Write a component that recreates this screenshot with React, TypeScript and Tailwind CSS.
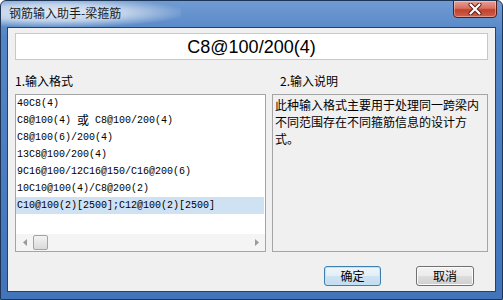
import React from "react";

const cjk = '"Noto Sans CJK SC", "Liberation Sans", sans-serif';
const mono = '"Liberation Mono", "Noto Sans CJK SC", monospace';

const rows: React.ReactNode[] = [
  "40C8(4)",
  <span className="flex items-center">C8@100(4) <span className="leading-[12px] text-[12px] -mt-[2px]" style={{ fontFamily: cjk }}>或</span> C8@100/200(4)</span>,
  "C8@100(6)/200(4)",
  "13C8@100/200(4)",
  "9C16@100/12C16@150/C16@200(6)",
  "10C10@100(4)/C8@200(2)",
  "C10@100(2)[2500];C12@100(2)[2500]",
];

export default function App() {
  return (
    <div
      className="w-[503px] h-[300px] flex flex-col rounded-t-[6px] border border-[#1d3557] bg-[linear-gradient(180deg,#719bd2_0%,#5385c6_12%,#4274ba_100%)] overflow-hidden"
      style={{ fontFamily: cjk }}
    >
      {/* title bar */}
      <div className="h-[26px] flex items-start shrink-0 relative">
        <div className="absolute left-0 top-0 w-[180px] h-[26px] bg-[radial-gradient(ellipse_at_30%_45%,rgba(235,240,248,0.95)_0%,rgba(215,226,240,0.8)_40%,rgba(120,160,210,0)_75%)]" />
        <span className="relative mt-[5px] ml-[8px] text-[12px] leading-[14px] text-[#1b1b1b]">钢筋输入助手-梁箍筋</span>
        <div className="relative ml-auto mr-[5px] w-[44px] h-[18px] -mt-px rounded-b-[4px] border border-[#5a1b14] bg-[linear-gradient(180deg,#e8a096_0%,#d7705f_45%,#c2412c_55%,#d0604a_100%)] flex items-center justify-center shadow-[inset_0_0_0_1px_rgba(255,255,255,0.35)]">
          <svg width="14" height="12" viewBox="0 0 14 12">
            <path d="M2.5 1.5 L11.5 10.5 M11.5 1.5 L2.5 10.5" stroke="#5a1b14" strokeWidth="4" strokeLinecap="round" />
            <path d="M2.5 1.5 L11.5 10.5 M11.5 1.5 L2.5 10.5" stroke="#ffffff" strokeWidth="2.2" strokeLinecap="round" />
          </svg>
        </div>
      </div>

      {/* client area */}
      <div className="ml-[6px] mr-[6px] h-[265px] border border-[#2a3f63] bg-[#f0f0f0] flex flex-col px-[7px]">
        {/* input box */}
        <div className="mt-[5px] h-[27px] bg-white border border-[#c8c8c8] flex items-center justify-center">
          <span className="text-[18px] leading-[20px] text-black" style={{ fontFamily: '"Liberation Sans", Arial, sans-serif' }}>
            C8@100/200(4)
          </span>
        </div>

        {/* labels */}
        <div className="flex mt-[12px] h-[17px] items-center text-[12px] leading-[14px] text-black">
          <div className="w-[257px]">1.输入格式</div>
          <div className="pl-[8px]">2.输入说明</div>
        </div>

        {/* boxes */}
        <div className="flex gap-[6px] mt-[5px] h-[158px]">
          <div className="w-[251px] border border-[#a5a5a5] bg-white flex flex-col">
            <div className="flex-1 flex flex-col pr-px text-[10px] text-black" style={{ fontFamily: mono }}>
              {rows.map((r, i) => (
                <div
                  key={i}
                  className={`h-[17px] flex items-center pl-[1px] whitespace-pre ${i === 6 ? "bg-[#cfe2f4]" : ""}`}
                >
                  {r}
                </div>
              ))}
            </div>
            {/* horizontal scrollbar */}
            <div className="h-[17px] flex items-center bg-[#f4f4f4]">
              <div className="w-[17px] h-[17px] flex items-center justify-center">
                <svg width="4" height="7" viewBox="0 0 4 7"><path d="M4 0 L0 3.5 L4 7 Z" fill="#9a9a9a" /></svg>
              </div>
              <div className="w-[15px] h-[15px] rounded-[2px] border border-[#a3a3a3] bg-[linear-gradient(180deg,#f3f3f3,#dadada)]" />
              <div className="flex-1" />
              <div className="w-[17px] h-[17px] flex items-center justify-center">
                <svg width="4" height="7" viewBox="0 0 4 7"><path d="M0 0 L4 3.5 L0 7 Z" fill="#9a9a9a" /></svg>
              </div>
            </div>
          </div>
          <div className="flex-1 border border-[#a5a5a5] bg-[#f0f0f0] pl-[2px] pt-[1px] text-[12px] leading-[17px] text-black">
            此种输入格式主要用于处理同一跨梁内不同范围存在不同箍筋信息的设计方式。
          </div>
        </div>

        {/* buttons */}
        <div className="flex justify-end gap-[35px] mt-[14px] pr-[14px]">
          <button className="w-[57px] h-[20px] rounded-[3px] border border-[#3c7fb1] bg-[linear-gradient(180deg,#eef6fb_0%,#e2eef8_50%,#cfe3f2_51%,#c4dcef_100%)] shadow-[inset_0_0_0_1px_#bfe3f8] text-[12px] leading-[14px] text-black">
            确定
          </button>
          <button className="w-[58px] h-[20px] rounded-[3px] border border-[#707070] bg-[linear-gradient(180deg,#f2f2f2_0%,#ebebeb_50%,#dddddd_51%,#cfcfcf_100%)] shadow-[inset_0_0_0_1px_#fbfbfb] text-[12px] leading-[14px] text-black">
            取消
          </button>
        </div>
      </div>
    </div>
  );
}
